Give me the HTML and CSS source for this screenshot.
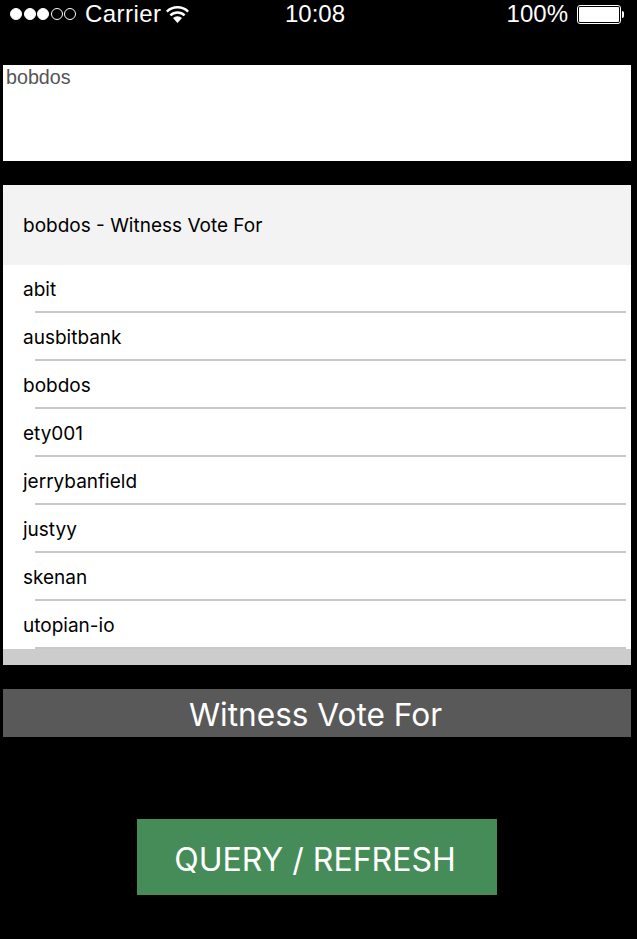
FILE: index.html
```html
<!DOCTYPE html>
<html lang="en">
<head>
    <meta charset="UTF-8">
    <meta name="viewport" content="width=device-width, initial-scale=1.0">
    <title>Witness Vote For</title>
    <link rel="stylesheet" href="styles.css">
</head>
<body>

    <div class="status-bar">
        <div class="status-left">
            <span class="signal">
                <i class="dot on"></i><i class="dot on"></i><i class="dot on"></i><i class="dot"></i><i class="dot"></i>
            </span>
            <span class="carrier">Carrier</span>
            <svg class="wifi" width="23" height="18" viewBox="0 0 22 17">
                <path d="M0 5.4 A15.8 15.8 0 0 1 22 5.4 L20.4 7.1 A13.4 13.4 0 0 0 1.6 7.1 Z" fill="#fff"/>
                <path d="M3.4 8.9 A11 11 0 0 1 18.6 8.9 L17 10.6 A8.6 8.6 0 0 0 5 10.6 Z" fill="#fff"/>
                <path d="M6.7 12.3 A6.2 6.2 0 0 1 15.3 12.3 L11 17 Z" fill="#fff"/>
            </svg>
        </div>
        <div class="status-time">10:08</div>
        <div class="status-right">
            <span class="percent">100%</span>
            <span class="battery"><span class="battery-fill"></span></span>
            <span class="battery-tip"></span>
        </div>
    </div>

    <div class="search-box">bobdos</div>

    <div class="list-panel">
        <div class="list-header">bobdos - Witness Vote For</div>
        <ul class="list">
            <li class="list-item">abit</li>
            <li class="list-item">ausbitbank</li>
            <li class="list-item">bobdos</li>
            <li class="list-item">ety001</li>
            <li class="list-item">jerrybanfield</li>
            <li class="list-item">justyy</li>
            <li class="list-item">skenan</li>
            <li class="list-item">utopian-io</li>
        </ul>
        <div class="list-footer"></div>
    </div>

    <div class="title-bar">Witness Vote For</div>

    <div class="button-container">
        <button class="button">QUERY / REFRESH</button>
    </div>

</body>
</html>
```

FILE: styles.css
```css
body {
    font-family: 'Inter', 'Roboto', sans-serif;
    background-color: #000;
    color: #000;
    margin: 0;
    padding: 0 6px 0 3px;
    height: 939px;
    box-sizing: border-box;
    overflow: hidden;
}
.status-bar {
    height: 65px;
    margin: 0 -6px 0 -3px;
    padding: 0 13px 37px 6px;
    box-sizing: border-box;
    display: grid;
    grid-template-columns: 1fr auto 1fr;
    align-items: center;
    color: #fff;
    font-family: 'Liberation Sans', sans-serif;
    font-size: 24px;
}
.status-left {
    display: flex;
    align-items: center;
    margin-left: 4px;
}
.signal {
    display: flex;
    gap: 1.5px;
    margin-right: 9px;
}
.dot {
    width: 12px;
    height: 12px;
    box-sizing: border-box;
    border: 1px solid #fff;
    border-radius: 50%;
}
.dot.on {
    background-color: #fff;
}
.carrier {
    letter-spacing: 0.45px;
}
.wifi {
    margin-left: 4px;
}
.status-time {
    text-align: center;
}
.status-right {
    display: flex;
    align-items: center;
    justify-content: flex-end;
}
.percent {
    margin-right: 9px;
}
.battery {
    width: 44px;
    height: 19px;
    box-sizing: border-box;
    border: 1px solid #fff;
    border-radius: 3px;
    padding: 1px;
    display: flex;
}
.battery-fill {
    flex: 1;
    background-color: #fff;
    border-radius: 1px;
}
.battery-tip {
    width: 2px;
    height: 7px;
    margin-left: 1px;
    background-color: #fff;
    border-radius: 0 2px 2px 0;
}
.search-box {
    height: 96px;
    background-color: #fff;
    color: #555;
    font-family: 'Liberation Sans', sans-serif;
    font-size: 19.7px;
    line-height: 24px;
    padding-left: 3px;
    box-sizing: border-box;
}
.list-panel {
    margin-top: 24px;
    height: 480px;
    background-color: #fff;
    display: flex;
    flex-direction: column;
}
.list-header {
    height: 80px;
    flex: none;
    background-color: #f3f3f3;
    padding-left: 20px;
    display: flex;
    align-items: center;
    font-size: 19px;
}
.list {
    list-style: none;
    margin: 0;
    padding: 0;
}
.list-item {
    height: 48px;
    margin-left: 20px;
    font-size: 19px;
    line-height: 50px;
    position: relative;
}
.list-item::after {
    content: '';
    position: absolute;
    left: 12px;
    right: 5px;
    bottom: 0;
    height: 2px;
    background-color: #c8c7cc;
}
.list-footer {
    flex: 1;
    background-color: #ccc;
}
.title-bar {
    margin-top: 24px;
    height: 48px;
    background-color: #595959;
    color: #fff;
    font-size: 31.6px;
    line-height: 52px;
    text-align: center;
    padding-right: 3px;
}
.button-container {
    display: flex;
    justify-content: center;
    margin-top: 82px;
}
.button {
    width: 360px;
    height: 76px;
    font-family: inherit;
    font-size: 32px;
    color: #fff;
    background-color: #468c58;
    border: none;
    padding: 4px 4px 0 0;
}
```
